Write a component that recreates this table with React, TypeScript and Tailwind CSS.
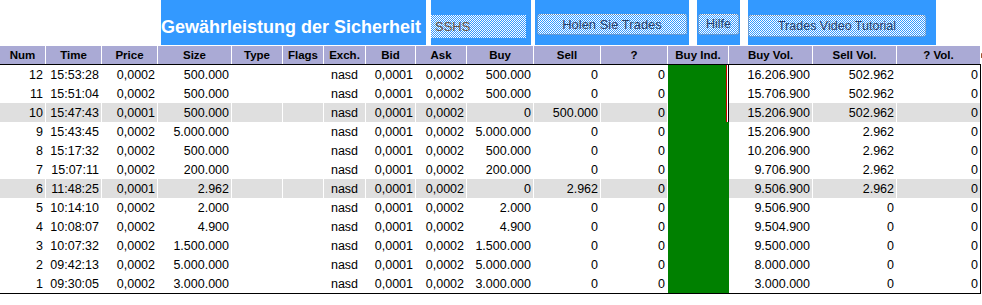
import React from 'react';

const cols =
  'grid grid-cols-[45px_55px_55px_73px_50px_40px_41px_49px_50px_66px_66px_66px_60px_83px_83px_83px] gap-x-px';

const headers = ['Num', 'Time', 'Price', 'Size', 'Type', 'Flags', 'Exch.', 'Bid', 'Ask', 'Buy', 'Sell', '?', 'Buy Ind.', 'Buy Vol.', 'Sell Vol.', '? Vol.'];

type Trade = {
  num: number;
  time: string;
  price: string;
  size: string;
  buy: string;
  sell: string;
  buyVol: string;
  sellVol: string;
  hl?: boolean;
  bar?: boolean;
};

const trades: Trade[] = [
  { num: 12, time: '15:53:28', price: '0,0002', size: '500.000', buy: '500.000', sell: '0', buyVol: '16.206.900', sellVol: '502.962', bar: true },
  { num: 11, time: '15:51:04', price: '0,0002', size: '500.000', buy: '500.000', sell: '0', buyVol: '15.706.900', sellVol: '502.962', bar: true },
  { num: 10, time: '15:47:43', price: '0,0001', size: '500.000', buy: '0', sell: '500.000', buyVol: '15.206.900', sellVol: '502.962', hl: true, bar: true },
  { num: 9, time: '15:43:45', price: '0,0002', size: '5.000.000', buy: '5.000.000', sell: '0', buyVol: '15.206.900', sellVol: '2.962' },
  { num: 8, time: '15:17:32', price: '0,0002', size: '500.000', buy: '500.000', sell: '0', buyVol: '10.206.900', sellVol: '2.962' },
  { num: 7, time: '15:07:11', price: '0,0002', size: '200.000', buy: '200.000', sell: '0', buyVol: '9.706.900', sellVol: '2.962' },
  { num: 6, time: '11:48:25', price: '0,0001', size: '2.962', buy: '0', sell: '2.962', buyVol: '9.506.900', sellVol: '2.962', hl: true },
  { num: 5, time: '10:14:10', price: '0,0002', size: '2.000', buy: '2.000', sell: '0', buyVol: '9.506.900', sellVol: '0' },
  { num: 4, time: '10:08:07', price: '0,0002', size: '4.900', buy: '4.900', sell: '0', buyVol: '9.504.900', sellVol: '0' },
  { num: 3, time: '10:07:32', price: '0,0002', size: '1.500.000', buy: '1.500.000', sell: '0', buyVol: '9.500.000', sellVol: '0' },
  { num: 2, time: '09:42:13', price: '0,0002', size: '5.000.000', buy: '5.000.000', sell: '0', buyVol: '8.000.000', sellVol: '0' },
  { num: 1, time: '09:30:05', price: '0,0002', size: '3.000.000', buy: '3.000.000', sell: '0', buyVol: '3.000.000', sellVol: '0' },
];

const dither =
  'bg-[repeating-conic-gradient(#3399ff_0%_25%,#ffffff_0%_50%)] bg-[length:2px_2px]';

function DitherButton({ label, className }: { label: string; className: string }) {
  return (
    <div
      className={`${dither} flex items-center justify-center rounded-[3px] border border-dotted border-[#6f86a8] text-[12.5px] text-[#2a3f6a] ${className}`}
    >
      {label}
    </div>
  );
}

function Cell({ children, hl, align = 'right' }: { children?: React.ReactNode; hl?: boolean; align?: 'right' | 'center' }) {
  return (
    <div
      className={`h-[19px] pt-px leading-[18px] ${align === 'center' ? 'text-center' : 'pr-[2px] text-right'} ${hl ? 'bg-[#dfdfdf]' : ''}`}
    >
      {children}
    </div>
  );
}

export default function App() {
  return (
    <div className="h-[305px] w-[982px] overflow-hidden bg-white font-['Liberation_Sans',Arial,sans-serif] text-black">
      {/* top bar */}
      <div className="flex h-[45px] pl-[161px]">
        <div className="w-[265px] bg-[#3399ff] pt-[18px] text-[18px] leading-[18px] font-bold whitespace-nowrap text-white">
          Gewährleistung der Sicherheit
        </div>
        <div className="ml-[5px] w-[100px] bg-[#3399ff] pt-[15px]">
          <div className={`${dither} h-[23px] w-[95px] pl-[4px] text-[13px] leading-[23px] text-[#6b5444]`}>SSHS</div>
        </div>
        <div className="ml-[4px] w-[154px] bg-[#3399ff] pt-[14px] pl-[2px]">
          <DitherButton label="Holen Sie Trades" className="h-[21px] w-[150px] text-[13px]" />
        </div>
        <div className="ml-[8px] w-[43px] bg-[#3399ff] pt-[14px] pl-px">
          <DitherButton label="Hilfe" className="h-[21px] w-[41px]" />
        </div>
        <div className="ml-[8px] w-[188px] bg-[#3399ff] pt-[15px]">
          <DitherButton label="Trades Video Tutorial" className="h-[22px] w-[178px]" />
        </div>
      </div>

      {/* header */}
      <div className="mt-px flex w-[982px] items-center">
        <div className={`${cols} text-[11.5px] font-bold`}>
          {headers.map((h) => (
            <div key={h} className="h-[18px] bg-[#aaaad5] text-center leading-[18px]">
              {h}
            </div>
          ))}
        </div>
        <div className="ml-px h-[5px] w-[2px] rounded-full bg-[#a0522d]" />
      </div>

      {/* body */}
      <div className="w-[981px] border-y border-r border-black text-[12.5px]">
        {trades.map((t) => (
          <div key={t.num} className={cols}>
            <Cell hl={t.hl}>{t.num}</Cell>
            <Cell hl={t.hl}>{t.time}</Cell>
            <Cell hl={t.hl}>{t.price}</Cell>
            <Cell hl={t.hl}>{t.size}</Cell>
            <Cell hl={t.hl} />
            <Cell hl={t.hl} />
            <Cell hl={t.hl} align="center">nasd</Cell>
            <Cell hl={t.hl}>0,0001</Cell>
            <Cell hl={t.hl}>0,0002</Cell>
            <Cell hl={t.hl}>{t.buy}</Cell>
            <Cell hl={t.hl}>{t.sell}</Cell>
            <Cell hl={t.hl}>0</Cell>
            {t.bar ? (
              <div className="flex h-[19px] w-[61px]">
                <div className="w-[58px] shrink-0 bg-[#008000]" />
                <div className="w-px shrink-0 bg-[#cc0000]" />
                <div className="w-px shrink-0 bg-white" />
                <div className="w-px shrink-0 bg-black" />
              </div>
            ) : (
              <div className="-mr-px h-[19px] bg-[#008000]" />
            )}
            <Cell hl={t.hl}>{t.buyVol}</Cell>
            <Cell hl={t.hl}>{t.sellVol}</Cell>
            <Cell hl={t.hl}>0</Cell>
          </div>
        ))}
      </div>
    </div>
  );
}
